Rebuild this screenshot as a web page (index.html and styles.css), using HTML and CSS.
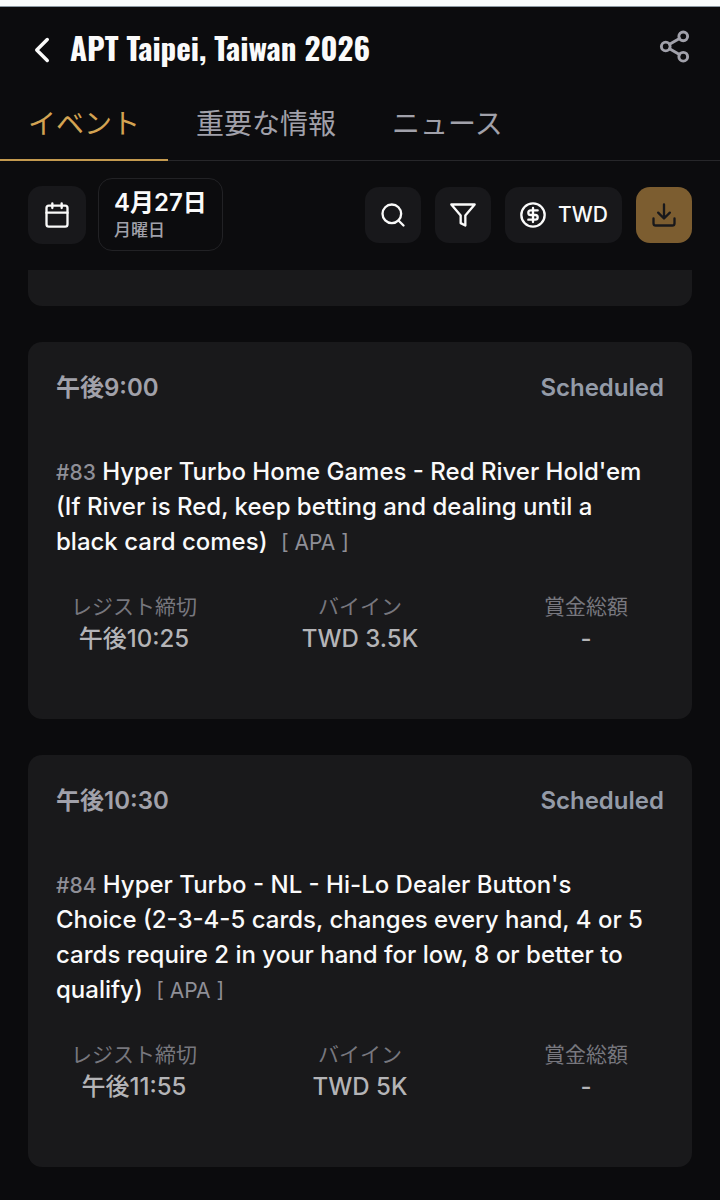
FILE: index.html
```html
<!DOCTYPE html>
<html lang="ja">
<head>
    <meta charset="utf-8">
    <meta name="viewport" content="width=device-width, initial-scale=1">
    <title>APT Taipei, Taiwan 2026</title>
    <link rel="stylesheet" href="styles.css">
</head>
<body>
<header class="header">
    <div class="title-bar">
        <button type="button" class="back-btn" aria-label="戻る">
            <svg viewBox="0 0 24 24"><path d="m15 18-6-6 6-6"/></svg>
        </button>
        <h1>APT Taipei, Taiwan 2026</h1>
        <button type="button" class="share-btn" aria-label="共有">
            <svg viewBox="0 0 24 24">
                <circle cx="18" cy="5" r="3"/>
                <circle cx="6" cy="12" r="3"/>
                <circle cx="18" cy="19" r="3"/>
                <path d="m8.6 13.5 6.8 4M15.4 6.5l-6.8 4"/>
            </svg>
        </button>
    </div>

    <nav class="tabs">
        <a href="#events" class="tab active">イベント</a>
        <a href="#info" class="tab">重要な情報</a>
        <a href="#news" class="tab">ニュース</a>
    </nav>

    <div class="toolbar">
        <button type="button" class="tool-btn calendar-btn" aria-label="カレンダー">
            <svg viewBox="0 0 24 24">
                <rect x="3" y="4" width="18" height="18" rx="2"/>
                <path d="M8 2v4M16 2v4M3 10h18"/>
            </svg>
        </button>
        <button type="button" class="date-btn">
            <span class="date">4月27日</span>
            <span class="weekday">月曜日</span>
        </button>
        <div class="tools">
            <button type="button" class="tool-btn" aria-label="検索">
                <svg viewBox="0 0 24 24">
                    <circle cx="11" cy="11" r="8"/>
                    <path d="m21 21-4.3-4.3"/>
                </svg>
            </button>
            <button type="button" class="tool-btn" aria-label="フィルター">
                <svg viewBox="0 0 24 24"><path d="M22 3H2l8 9.46V19l4 2v-8.54L22 3z"/></svg>
            </button>
            <button type="button" class="tool-btn currency-btn">
                <svg viewBox="0 0 24 24">
                    <circle cx="12" cy="12" r="10"/>
                    <path d="M16 8h-6a2 2 0 1 0 0 4h4a2 2 0 1 1 0 4H8M12 18V6"/>
                </svg>
                TWD
            </button>
            <button type="button" class="tool-btn download-btn" aria-label="ダウンロード">
                <svg viewBox="0 0 24 24">
                    <path d="M21 15v4a2 2 0 0 1-2 2H5a2 2 0 0 1-2-2v-4M7 10l5 5 5-5M12 15V3"/>
                </svg>
            </button>
        </div>
    </div>
</header>

<main class="events" id="events">
    <!-- end of the previous card, scrolled under the header -->
    <div class="card card-cut"></div>

    <article class="card">
        <div class="card-head">
            <span class="time">午後9:00</span>
            <span class="status">Scheduled</span>
        </div>
        <h2><span class="number">#83</span> Hyper Turbo Home Games - Red River Hold'em (If River is Red, keep betting and dealing until a black card comes) <span class="tag">[ APA ]</span></h2>
        <dl class="stats">
            <div>
                <dt>レジスト締切</dt>
                <dd>午後10:25</dd>
            </div>
            <div>
                <dt>バイイン</dt>
                <dd>TWD 3.5K</dd>
            </div>
            <div>
                <dt>賞金総額</dt>
                <dd>-</dd>
            </div>
        </dl>
    </article>

    <article class="card">
        <div class="card-head">
            <span class="time">午後10:30</span>
            <span class="status">Scheduled</span>
        </div>
        <h2><span class="number">#84</span> Hyper Turbo - NL - Hi-Lo Dealer Button's Choice (2-3-4-5 cards, changes every hand, 4 or 5 cards require 2 in your hand for low, 8 or better to qualify) <span class="tag">[ APA ]</span></h2>
        <dl class="stats">
            <div>
                <dt>レジスト締切</dt>
                <dd>午後11:55</dd>
            </div>
            <div>
                <dt>バイイン</dt>
                <dd>TWD 5K</dd>
            </div>
            <div>
                <dt>賞金総額</dt>
                <dd>-</dd>
            </div>
        </dl>
    </article>
</main>
</body>
</html>
```

FILE: styles.css
```css
* {
    box-sizing: border-box;
}
body {
    margin: 0;
    background-color: #0b0b0d;
    color: #fafafa;
    font-family: Inter, "Noto Sans CJK JP", sans-serif;
    font-size: 24px;
    line-height: 35px;
}
button {
    margin: 0;
    padding: 0;
    border: none;
    background: none;
    color: inherit;
    font: inherit;
    cursor: pointer;
}
svg {
    display: block;
    width: 28px;
    height: 28px;
    fill: none;
    stroke: currentColor;
    stroke-width: 2;
    stroke-linecap: round;
    stroke-linejoin: round;
}

/* header */
.header {
    background-color: #0c0c0e;
    border-top: 6px solid #fafcfd;
}
.title-bar {
    display: flex;
    align-items: center;
    height: 80px;
    padding: 0 28px 0 21px;
    border-top: 1px solid #8c99a3;
}
.title-bar h1 {
    flex: 1;
    margin: 0 0 0 7px;
    font-family: Oswald, "Liberation Sans Narrow", "Liberation Sans", sans-serif;
    font-size: 31px;
    font-weight: 700;
    line-height: 42px;
}
.back-btn {
    padding-top: 6px;
}
.back-btn svg {
    width: 42px;
    height: 42px;
}
.share-btn {
    color: #a1a1aa;
}
.share-btn svg {
    width: 35px;
    height: 35px;
}
.tabs {
    display: flex;
    border-bottom: 1px solid #27272a;
}
.tab {
    margin-bottom: -1px;
    padding: 18px 28px 15px;
    border-bottom: 2px solid transparent;
    color: #a1a1aa;
    font-size: 28px;
    line-height: 40px;
    text-decoration: none;
}
.tab.active {
    border-color: #c49a4f;
    color: #d3a352;
}
.toolbar {
    display: flex;
    align-items: center;
    padding: 17px 28px 19px;
}
.tool-btn {
    display: flex;
    align-items: center;
    justify-content: center;
    width: 56px;
    height: 56px;
    border-radius: 14px;
    background-color: #18181b;
}
.calendar-btn {
    width: 58px;
    height: 58px;
}
.date-btn {
    margin-left: 12px;
    padding: 8px 15px;
    border: 1px solid #222225;
    border-radius: 14px;
    text-align: left;
}
.date-btn span {
    display: block;
}
.date {
    font-weight: 600;
    line-height: 31px;
}
.weekday {
    color: #a1a1aa;
    font-size: 17px;
    font-weight: 500;
    line-height: 24px;
}
.tools {
    display: flex;
    gap: 14px;
    margin-left: auto;
}
.currency-btn {
    gap: 11px;
    width: auto;
    padding: 0 14px;
    font-size: 21px;
    font-weight: 500;
}
.download-btn {
    background-color: #7c5d30;
    color: #18181b;
}

/* event list */
.events {
    display: flex;
    flex-direction: column;
    gap: 36px;
    padding: 0 28px 32px;
}
.card {
    padding: 28px 28px 63px;
    border-radius: 14px;
    background-color: #19191b;
}
.card-cut {
    height: 36px;
    padding: 0;
    border-radius: 0 0 14px 14px;
}
.card-head {
    display: flex;
    justify-content: space-between;
    font-weight: 600;
}
.time {
    color: #a1a1aa;
}
.status {
    color: #949ba8;
}
.card h2 {
    margin: 49px 0 34px;
    padding-right: 12px;
    font-size: 24px;
    font-weight: 500;
}
.number,
.tag {
    color: #8f8f97;
    font-size: 21px;
    line-height: 28px;
}
.tag {
    margin-left: 7px;
    font-weight: 400;
}
.stats {
    display: grid;
    grid-template-columns: repeat(3, 1fr);
    gap: 70px;
    margin: 0;
    text-align: center;
}
.stats dt {
    color: #77777e;
    font-size: 21px;
    line-height: 28px;
    white-space: nowrap;
}
.stats dd {
    margin: 0;
    color: #b4b4b7;
    font-weight: 500;
    white-space: nowrap;
}
```
